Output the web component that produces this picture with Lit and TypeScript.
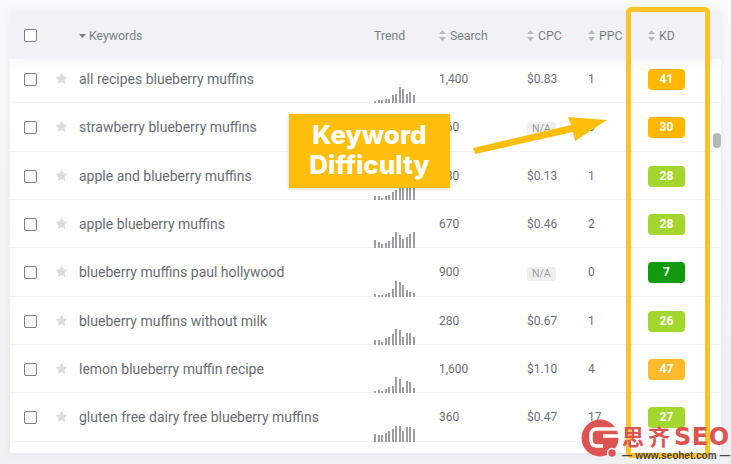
import { LitElement, html, css, svg } from "lit";
import { customElement } from "lit/decorators.js";

interface Row {
  keyword: string;
  trend: number[];
  search: string;
  cpc: string;
  ppc: string;
  kd: number;
  color: string;
}

const ORANGE = "#ffb700";
const LIME = "#a3d72e";
const GREEN = "#129a0e";

const ROWS: Row[] = [
  { keyword: "all recipes blueberry muffins", trend: [2, 3, 3, 4, 4, 8, 9, 16, 14, 9, 11, 8], search: "1,400", cpc: "$0.83", ppc: "1", kd: 41, color: ORANGE },
  { keyword: "strawberry blueberry muffins", trend: [3, 3, 4, 4, 6, 8, 10, 16, 14, 10, 10, 8], search: "360", cpc: "N/A", ppc: "0", kd: 30, color: ORANGE },
  { keyword: "apple and blueberry muffins", trend: [4, 4, 2, 4, 5, 8, 10, 16, 14, 13, 14, 14], search: "880", cpc: "$0.13", ppc: "1", kd: 28, color: LIME },
  { keyword: "apple blueberry muffins", trend: [8, 6, 4, 5, 7, 11, 16, 13, 9, 11, 14, 16], search: "670", cpc: "$0.46", ppc: "2", kd: 28, color: LIME },
  { keyword: "blueberry muffins paul hollywood", trend: [3, 2, 2, 3, 4, 8, 16, 15, 12, 7, 5, 4], search: "900", cpc: "N/A", ppc: "0", kd: 7, color: GREEN },
  { keyword: "blueberry muffins without milk", trend: [5, 5, 3, 7, 8, 11, 16, 15, 8, 12, 12, 8], search: "280", cpc: "$0.67", ppc: "1", kd: 26, color: LIME },
  { keyword: "lemon blueberry muffin recipe", trend: [2, 3, 2, 4, 6, 7, 16, 14, 6, 12, 11, 5], search: "1,600", cpc: "$1.10", ppc: "4", kd: 47, color: "#ffbb2c" },
  { keyword: "gluten free dairy free blueberry muffins", trend: [8, 7, 7, 9, 11, 13, 16, 16, 11, 15, 15, 13], search: "360", cpc: "$0.47", ppc: "17", kd: 27, color: LIME },
];

const sortIcon = html`<svg class="sort" width="7" height="11" viewBox="0 0 7 11">
  <path d="M3.5 0 7 4H0zM3.5 11 0 7h7z" fill="#b4b8bc"></path>
</svg>`;

const star = html`<svg class="star" width="13" height="13" viewBox="0 0 24 24">
  <path d="M12 1.5l3.3 7 7.7.9-5.7 5.2 1.500 7.600L12 18.400l-6.800 3.800 1.500-7.600L1 9.400l7.700-.9z" fill="#d9dbdd"></path>
</svg>`;

@customElement("app-root")
export class AppRoot extends LitElement {
  static styles = css`
    :host {
      display: block;
      position: relative;
      width: 731px;
      height: 464px;
      overflow: hidden;
      background: linear-gradient(#f8f9fa, #eef0f2);
      font-family: Roboto, "Liberation Sans", sans-serif;
      color: #63676b;
    }
    .page {
      padding: 12px 10px 0;
    }
    .card {
      width: 711px;
      height: 441px;
      background: #fff;
      box-shadow: 0 0 8px rgba(90, 100, 110, 0.08);
      overflow: hidden;
    }
    .head,
    .row {
      display: grid;
      grid-template-columns: 31px 24px 295px 65px 88px 61px 60px 1fr;
      padding-left: 14px;
      box-sizing: border-box;
    }
    .head {
      position: relative;
      z-index: 1;
      height: 47px;
      align-items: center;
      background: #f0f2f5;
      box-shadow: 0 4px 10px rgba(120, 130, 140, 0.08);
      font-size: 12.3px;
      color: #7b8085;
    }
    .head > div {
      display: flex;
      align-items: center;
      gap: 4px;
    }
    .head .caret {
      gap: 3px;
    }
    .rows {
      margin-top: -4px;
    }
    .row {
      height: 48.33px;
      border-bottom: 1px solid #f3f4f5;
    }
    .row > div {
      padding-top: 15px;
    }
    .row .check {
      padding-top: 18px;
    }
    .box {
      width: 13px;
      height: 13px;
      box-sizing: border-box;
      border: 1px solid #7d8185;
      border-radius: 2px;
      background: #fff;
    }
    .row .fav {
      padding-top: 17px;
    }
    .star {
      display: block;
    }
    .row .kw {
      font-size: 14px;
      line-height: 18px;
      color: #696d71;
    }
    .row .num {
      padding-top: 16px;
      font-size: 12px;
      line-height: 16px;
      color: #6c7074;
    }
    .row .trend {
      padding: 0;
      display: flex;
      align-items: flex-end;
      gap: 1.55px;
      height: 48.33px;
    }
    .bar {
      width: 2px;
      background: #9a9ea1;
    }
    .na {
      display: inline-block;
      padding: 0 5px;
      height: 14px;
      line-height: 14px;
      margin-top: 3px;
      border-radius: 3px;
      background: #efefef;
      color: #9a9da0;
      font-size: 10.5px;
    }
    .row .kd {
      padding-top: 14px;
    }
    .badge {
      width: 37px;
      height: 21px;
      line-height: 21px;
      border-radius: 4px;
      text-align: center;
      color: #fff;
      font-size: 12px;
      font-weight: 700;
    }
    .thumb {
      position: absolute;
      z-index: 2;
      left: 713px;
      top: 133px;
      width: 8px;
      height: 15px;
      border-radius: 4px;
      background: #b4b7ba;
    }
    .callout {
      position: absolute;
      z-index: 2;
      left: 289px;
      top: 114px;
      width: 161px;
      height: 74px;
      box-sizing: border-box;
      padding-top: 6px;
      background: #ffbe0b;
      box-shadow: 0 1px 4px rgba(120, 90, 0, 0.25);
      color: #fff;
      font-family: Inter, sans-serif;
      font-weight: 800;
      font-size: 26px;
      line-height: 30px;
      text-align: center;
    }
    .overlay {
      position: absolute;
      z-index: 2;
      left: 0;
      top: 0;
    }
    .frame {
      position: absolute;
      z-index: 2;
      left: 626px;
      top: 7px;
      width: 84px;
      height: 451px;
      box-sizing: border-box;
      border: 5px solid #ffc326;
      border-radius: 5px;
    }
    .mark {
      position: absolute;
      z-index: 3;
      left: 622px;
      top: 421px;
      width: 109px;
      font-family: "Noto Sans CJK SC", sans-serif;
      color: #dc5452;
      font-weight: 700;
      font-size: 22px;
      line-height: 28px;
      letter-spacing: 4px;
      white-space: nowrap;
    }
    .mark .latin {
      font-family: "DejaVu Sans", sans-serif;
      font-size: 24px;
      letter-spacing: 0.5px;
    }
    .mark small {
      display: block;
      font-family: "Liberation Sans", sans-serif;
      font-size: 10px;
      line-height: 10px;
      letter-spacing: 0;
      word-spacing: 0.5px;
      color: #4b4544;
    }
  `;

  private renderRow(r: Row) {
    return html`
      <div class="row">
        <div class="check"><div class="box"></div></div>
        <div class="fav">${star}</div>
        <div class="kw">${r.keyword}</div>
        <div class="trend">
          ${r.trend.map((h) => html`<div class="bar" style="height:${h}px"></div>`)}
        </div>
        <div class="num">${r.search}</div>
        <div class="num">${r.cpc === "N/A" ? html`<span class="na">N/A</span>` : r.cpc}</div>
        <div class="num">${r.ppc}</div>
        <div class="kd"><div class="badge" style="background:${r.color}">${r.kd}</div></div>
      </div>
    `;
  }

  render() {
    return html`
      <div class="page">
        <div class="card">
          <div class="head">
            <div><div class="box"></div></div>
            <div></div>
            <div class="caret">
              <svg width="7" height="4" viewBox="0 0 7 4"><path d="M0 0h7L3.500 4z" fill="#777c81"></path></svg>Keywords
            </div>
            <div>Trend</div>
            <div>${sortIcon}Search</div>
            <div>${sortIcon}CPC</div>
            <div>${sortIcon}PPC</div>
            <div>${sortIcon}KD</div>
          </div>
          <div class="rows">${ROWS.map((r) => this.renderRow(r))}</div>
        </div>
      </div>
      <div class="thumb"></div>
      <div class="callout">Keyword<br />Difficulty</div>
      <svg class="overlay" width="731" height="464" viewBox="0 0 731 464">
        ${svg`<path d="M473 148 L571 125 L568 117 L607 120 L575 141 L573 132 L475 154z" fill="#ffbe0b"></path>`}
      </svg>
      <div class="frame"></div>
      <svg class="overlay" width="731" height="464" viewBox="0 0 731 464">
        ${svg`
          <circle cx="600" cy="438" r="18.500" fill="#dc5452"></circle>
          <path d="M620 429H597q-6 0-6 6v5q0 6 6 6h6M603 436h16" fill="none" stroke="#fff" stroke-width="3.500"></path>
          <circle cx="612" cy="453" r="4.500" fill="#dc5452" stroke="#fff" stroke-width="1.500"></circle>
        `}
      </svg>
      <div class="mark">思齐<span class="latin">SEO</span><small>— www.seohet.com —</small></div>
    `;
  }
}
